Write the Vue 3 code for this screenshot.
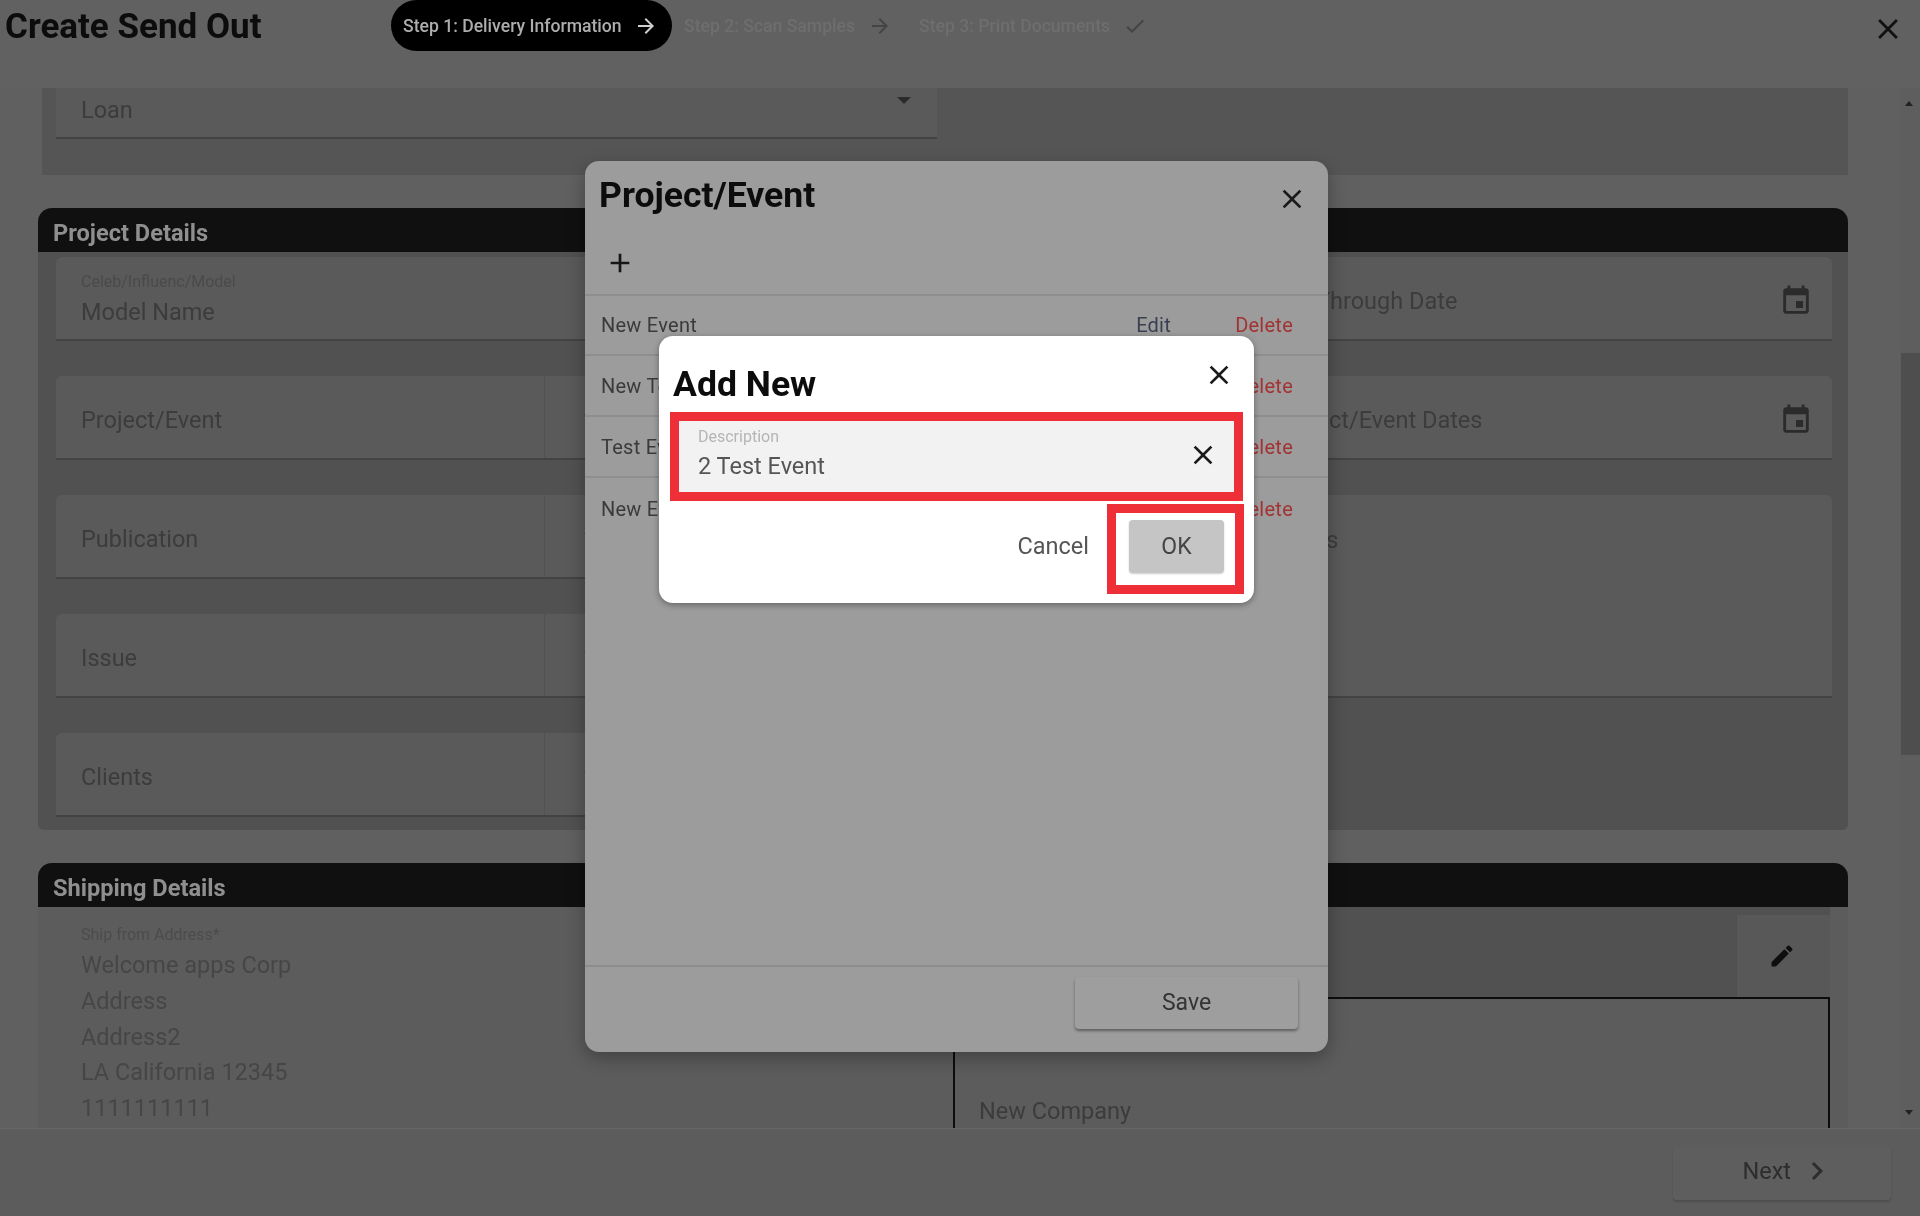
<script setup>
const icons = {
  close: 'M19 6.41 17.59 5 12 10.59 6.41 5 5 6.41 10.59 12 5 17.59 6.41 19 12 13.41 17.59 19 19 17.59 13.41 12z',
  plus: 'M19 13h-6v6h-2v-6H5v-2h6V5h2v6h6v2z',
  arrow: 'M12 4l-1.41 1.41L16.17 11H4v2h12.17l-5.58 5.59L12 20l8-8z',
  check: 'M21 7L9 19l-5.5-5.5 1.41-1.41L9 16.17 19.59 5.59 21 7z',
  chevron: 'M10 6 8.59 7.41 13.17 12l-4.58 4.59L10 18l6-6z',
  calendar: 'M17 12h-5v5h5v-5zM16 1v2H8V1H6v2H5c-1.11 0-1.99.9-1.99 2L3 19c0 1.1.89 2 2 2h14c1.1 0 2-.9 2-2V5c0-1.1-.9-2-2-2h-1V1h-2zm3 18H5V8h14v11z',
  pencil: 'M3 17.25V21h3.75L17.81 9.94l-3.75-3.75L3 17.25zM20.71 7.04c.39-.39.39-1.02 0-1.41l-2.34-2.34c-.39-.39-1.02-.39-1.41 0l-1.83 1.83 3.75 3.75 1.83-1.83z'
}

const selects = ['Project/Event', 'Publication', 'Issue', 'Clients']
const events = ['New Event', 'New Test', 'Test Event', 'New Event 2']
const address = ['Welcome apps Corp', 'Address', 'Address2', 'LA California 12345', '1111111111']
</script>

<template>
  <div class="page">
    <header class="top">
      <h1>Create Send Out</h1>
      <div class="step active">
        Step 1: Delivery Information
        <svg viewBox="0 0 24 24" class="step-icon"><path :d="icons.arrow" /></svg>
      </div>
      <div class="step">
        Step 2: Scan Samples
        <svg viewBox="0 0 24 24" class="step-icon"><path :d="icons.arrow" /></svg>
      </div>
      <div class="step">
        Step 3: Print Documents
        <svg viewBox="0 0 24 24" class="step-icon"><path :d="icons.check" /></svg>
      </div>
      <svg viewBox="0 0 24 24" class="top-close"><path :d="icons.close" /></svg>
    </header>

    <div class="middle">
      <main class="scroller">
        <section class="loan-card">
          <div class="loan-field">
            <span class="value">Loan</span>
            <span class="triangle"></span>
          </div>
        </section>

        <section class="block">
          <h2>Project Details</h2>
          <div class="block-body">
            <div class="col">
              <div class="field stacked">
                <span class="label">Celeb/Influenc/Model</span>
                <span class="value">Model Name</span>
              </div>
              <div v-for="name in selects" :key="name" class="field select">
                <span class="value">{{ name }}</span>
                <span class="addon"><span class="triangle"></span></span>
              </div>
            </div>
            <div class="col">
              <div class="field">
                <span class="value through">Through Date</span>
                <svg viewBox="0 0 24 24" class="calendar"><path :d="icons.calendar" /></svg>
              </div>
              <div class="field">
                <span class="value dates">Project/Event Dates</span>
                <svg viewBox="0 0 24 24" class="calendar"><path :d="icons.calendar" /></svg>
              </div>
              <div class="field tall">
                <span class="value notes">Notes</span>
              </div>
            </div>
          </div>
        </section>

        <section class="block shipping">
          <h2>Shipping Details</h2>
          <div class="ship-body">
            <div class="ship-from">
              <span class="label">Ship from Address*</span>
              <span v-for="line in address" :key="line" class="value">{{ line }}</span>
            </div>
            <div class="ship-to">
              <div class="ship-head">
                <span class="pencil-box">
                  <svg viewBox="0 0 24 24" class="pencil"><path :d="icons.pencil" /></svg>
                </span>
              </div>
              <div class="ship-box">
                <span class="value">New Company</span>
              </div>
            </div>
          </div>
        </section>
      </main>

      <aside class="scrollbar">
        <span class="arrow up"></span>
        <span class="thumb"></span>
        <span class="arrow down"></span>
      </aside>
    </div>

    <footer class="bottom">
      <button class="next">
        Next
        <svg viewBox="0 0 24 24" class="chevron"><path :d="icons.chevron" /></svg>
      </button>
    </footer>

    <div class="dialog project-dialog">
      <div class="project-head">
        <h3>Project/Event</h3>
        <svg viewBox="0 0 24 24" class="x"><path :d="icons.close" /></svg>
      </div>
      <div class="plus-row">
        <svg viewBox="0 0 24 24" class="plus"><path :d="icons.plus" /></svg>
      </div>
      <div class="rows">
        <div v-for="item in events" :key="item" class="row">
          <span class="row-name">{{ item }}</span>
          <span class="edit">Edit</span>
          <span class="delete">Delete</span>
        </div>
      </div>
      <div class="project-foot">
        <button class="save">Save</button>
      </div>
    </div>

    <div class="dialog add-dialog">
      <div class="add-head">
        <h3>Add New</h3>
        <svg viewBox="0 0 24 24" class="x"><path :d="icons.close" /></svg>
      </div>
      <div class="mark">
        <div class="input">
          <div class="input-text">
            <span class="input-label">Description</span>
            <span class="input-value">2 Test Event</span>
          </div>
          <svg viewBox="0 0 24 24" class="x"><path :d="icons.close" /></svg>
        </div>
      </div>
      <div class="actions">
        <span class="cancel">Cancel</span>
        <div class="mark ok-mark">
          <button class="ok">OK</button>
        </div>
      </div>
    </div>
  </div>
</template>

<style>
html, body {
  margin: 0;
  background: #5f5f5f;
}
</style>

<style scoped>
.page {
  position: relative;
  width: 1920px;
  height: 1216px;
  overflow: hidden;
  display: flex;
  flex-direction: column;
  background: #606060;
  font-family: Roboto, "Liberation Sans", sans-serif;
  color: #3c3c3c;
  filter: blur(0.6px);
}

svg {
  display: block;
  fill: currentColor;
  flex: none;
}

/* header */
.top {
  height: 88px;
  flex: none;
  display: flex;
  align-items: flex-start;
  background: #616161;
}

.top h1 {
  margin: 7px 0 0 5px;
  width: 386px;
  font-size: 35px;
  line-height: 40px;
  font-weight: 700;
  color: #0c0c0c;
}

.step {
  display: flex;
  align-items: center;
  height: 51px;
  font-size: 17.6px;
  font-weight: 500;
  color: #6e6e6e;
  margin-right: 27px;
}

.step.active {
  width: 281px;
  box-sizing: border-box;
  padding: 0 14px 0 12px;
  justify-content: space-between;
  margin-right: 12px;
  background: #000;
  border-radius: 26px;
  color: #adadad;
}

.step-icon {
  width: 24px;
  height: 24px;
  margin-left: 13px;
  color: #444;
}

.step.active .step-icon {
  color: #cfcfcf;
  margin-left: 0;
}

.top-close {
  width: 34px;
  height: 34px;
  margin: 12px 15px 0 auto;
  color: #111;
}

/* scrolling part */
.middle {
  flex: 1;
  display: flex;
  min-height: 0;
}

.scroller {
  flex: 1;
  overflow: hidden;
  padding-left: 38px;
  background: #606060;
}

.loan-card {
  width: 1806px;
  margin-left: 4px;
  padding: 0 0 36px 14px;
  box-sizing: border-box;
  background: #555;
}

.loan-field {
  position: relative;
  width: 881px;
  height: 51px;
  box-sizing: border-box;
  padding-left: 25px;
  background: #5a5a5a;
  border-bottom: 2px solid #434343;
  display: flex;
  align-items: flex-end;
  padding-bottom: 12px;
}

.triangle {
  width: 0;
  height: 0;
  border-left: 7px solid transparent;
  border-right: 7px solid transparent;
  border-top: 7px solid #2b2b2b;
}

.loan-field .triangle {
  position: absolute;
  right: 26px;
  top: 9px;
}

.block {
  width: 1810px;
  margin-top: 33px;
}

.block h2 {
  margin: 0;
  height: 44px;
  padding: 5px 0 0 15px;
  box-sizing: border-box;
  background: #101010;
  border-radius: 14px 14px 0 0;
  font-size: 23.6px;
  line-height: 41px;
  font-weight: 700;
  color: #8f8f8f;
}

.block-body {
  height: 578px;
  box-sizing: border-box;
  display: grid;
  grid-template-columns: 881px 879px;
  column-gap: 16px;
  padding: 5px 17px 0 18px;
  background: #515151;
  border-radius: 0 0 6px 6px;
}

.col {
  display: flex;
  flex-direction: column;
  gap: 35px;
}

.field {
  height: 84px;
  flex: none;
  box-sizing: border-box;
  display: flex;
  align-items: center;
  padding: 5px 0 0 25px;
  background: #5a5a5a;
  border-bottom: 2px solid #434343;
  border-radius: 6px 6px 0 0;
}

.field.stacked {
  flex-direction: column;
  align-items: flex-start;
  justify-content: center;
  padding-top: 2px;
  gap: 5px;
}

.field.tall {
  height: 203px;
  align-items: flex-start;
  padding-top: 30px;
}

.value {
  font-size: 23.5px;
  line-height: 30px;
  color: #3c3c3c;
}

.label {
  font-size: 16px;
  line-height: 20px;
  color: #4a4a4a;
}

.field.select {
  justify-content: space-between;
  padding-right: 0;
}

.addon {
  width: 393px;
  margin-top: -5px;
  align-self: stretch;
  border-left: 1px solid #525252;
  display: flex;
  align-items: center;
  padding-left: 39px;
  box-sizing: border-box;
}

.through {
  margin-left: 338px;
}

.dates {
  margin-left: 297px;
}

.notes {
  margin-left: 298px;
}

.calendar {
  width: 34px;
  height: 34px;
  margin-left: auto;
  margin-right: 19px;
  color: #2b2b2b;
}

.ship-body {
  display: grid;
  grid-template-columns: 897px 877px;
  padding-left: 18px;
  background: #5c5c5c;
  height: 230px;
}

.ship-from {
  display: flex;
  flex-direction: column;
  padding: 18px 0 0 25px;
}

.ship-from .label {
  line-height: 20px;
  margin-bottom: 3px;
  color: #4c4c4c;
}

.ship-from .value {
  line-height: 35.8px;
  color: #464646;
}

.ship-to {
  display: flex;
  flex-direction: column;
}

.ship-head {
  height: 90px;
  flex: none;
  display: flex;
  justify-content: flex-end;
  background: #515151;
}

.pencil-box {
  width: 94px;
  height: 82px;
  margin-top: 8px;
  box-sizing: border-box;
  background: #585858;
  border-left: 1px solid #505050;
  display: flex;
  align-items: center;
  justify-content: center;
  padding-right: 3px;
}

.pencil {
  width: 28px;
  height: 28px;
  color: #0e0e0e;
}

.ship-box {
  flex: 1;
  border-top: 2px solid #0d0d0d;
  border-left: 2px solid #0d0d0d;
  border-right: 2px solid #0d0d0d;
  padding: 97px 0 0 24px;
  background: #5c5c5c;
}

.scrollbar {
  width: 20px;
  flex: none;
  display: flex;
  flex-direction: column;
  align-items: stretch;
  background: #5e5e5e;
  position: relative;
}

.thumb {
  position: absolute;
  left: 1px;
  right: 0;
  top: 265px;
  height: 402px;
  background: #4e4e4e;
}

.arrow {
  position: absolute;
  left: 5px;
  width: 0;
  height: 0;
  border-left: 4px solid transparent;
  border-right: 4px solid transparent;
}

.arrow.up {
  top: 13px;
  border-bottom: 5px solid #222;
}

.arrow.down {
  top: 1022px;
  border-top: 5px solid #222;
}

/* footer */
.bottom {
  height: 88px;
  flex: none;
  box-sizing: border-box;
  background: #5c5c5c;
  border-top: 1px solid #666;
  display: flex;
  justify-content: flex-end;
  padding: 18px 29px 0 0;
}

.next {
  width: 218px;
  height: 53px;
  display: flex;
  align-items: center;
  justify-content: flex-end;
  padding: 0 81px 6px 0;
  background: #5e5e5e;
  border: none;
  border-radius: 4px;
  box-shadow: 0 2px 2px #4e4e4e;
  font-family: inherit;
  font-size: 23.5px;
  color: #2d2d2d;
  gap: 8px;
}

.chevron {
  width: 36px;
  height: 36px;
  margin-right: -25px;
}

/* dialogs */
.dialog {
  position: absolute;
  box-sizing: border-box;
  display: flex;
  flex-direction: column;
  border-radius: 14px;
}

.dialog h3 {
  margin: 0;
  font-size: 35.6px;
  line-height: 40px;
  font-weight: 700;
  color: #0c0c0c;
}

.x {
  width: 32px;
  height: 32px;
  color: #1a1a1a;
}

.project-dialog {
  left: 585px;
  top: 161px;
  width: 743px;
  height: 891px;
  background: #9c9c9c;
  box-shadow: 0 6px 18px rgba(0, 0, 0, 0.3);
}

.project-head {
  height: 70px;
  flex: none;
  display: flex;
  justify-content: space-between;
  padding: 14px 20px 0 14px;
  box-sizing: border-box;
}

.project-head .x {
  margin-top: 8px;
}

.plus-row {
  height: 65px;
  flex: none;
  padding: 16px 0 0 19px;
  box-sizing: border-box;
  border-bottom: 2px solid #8e8e8e;
}

.plus {
  width: 32px;
  height: 32px;
  color: #161616;
}

.rows {
  flex: 1;
  margin-top: -1px;
}

.row {
  height: 61px;
  box-sizing: border-box;
  display: flex;
  align-items: center;
  padding: 0 35px 0 16px;
  border-bottom: 2px solid #8e8e8e;
  font-size: 20px;
  letter-spacing: 0.25px;
}

.row:last-child {
  border-bottom: none;
}

.row-name {
  flex: 1;
  color: #3a3a3a;
}

.edit {
  width: 99px;
  color: #3b3f52;
}

.delete {
  color: #a33232;
}

.project-foot {
  height: 87px;
  flex: none;
  box-sizing: border-box;
  border-top: 2px solid #8d8d8d;
  display: flex;
  justify-content: flex-end;
  padding: 10px 30px 0 0;
}

.save {
  width: 223px;
  height: 52px;
  padding-bottom: 2px;
  border: none;
  border-radius: 4px;
  background: #9e9e9e;
  box-shadow: 0 2px 3px rgba(0, 0, 0, 0.4);
  font-family: inherit;
  font-size: 23px;
  color: #333;
}

.add-dialog {
  left: 659px;
  top: 336px;
  width: 595px;
  height: 267px;
  padding: 0 11px;
  background: #fff;
  box-shadow: 0 2px 6px rgba(0, 0, 0, 0.35);
}

.add-head {
  height: 76px;
  flex: none;
  display: flex;
  justify-content: space-between;
  padding: 28px 8px 0 3px;
  box-sizing: border-box;
}

.add-head .x {
  margin-top: -5px;
}

.mark {
  border: 9px solid #ee2f38;
}

.input {
  height: 71px;
  display: flex;
  align-items: center;
  justify-content: space-between;
  padding: 0 15px 4px 19px;
  box-sizing: border-box;
  background: #f2f2f2;
}

.input-text {
  display: flex;
  flex-direction: column;
}

.input-label {
  font-size: 16px;
  line-height: 20px;
  color: #b5b5b5;
}

.input-value {
  font-size: 23.5px;
  line-height: 32px;
  margin-top: 3px;
  color: #555;
}

.actions {
  display: flex;
  justify-content: flex-end;
  align-items: center;
  margin: 3px -1px 0 0;
}

.cancel {
  font-size: 23.5px;
  color: #555;
  margin-right: 18px;
  margin-bottom: 6px;
}

.ok-mark {
  width: 137px;
  height: 90px;
  box-sizing: border-box;
  display: flex;
  align-items: center;
  justify-content: center;
  padding: 0 0 5px 2px;
}

.ok {
  width: 95px;
  height: 53px;
  border: none;
  border-radius: 4px;
  background: #c5c5c5;
  box-shadow: 0 1px 2px rgba(0, 0, 0, 0.2);
  font-family: inherit;
  font-size: 23px;
  color: #444;
}
</style>
